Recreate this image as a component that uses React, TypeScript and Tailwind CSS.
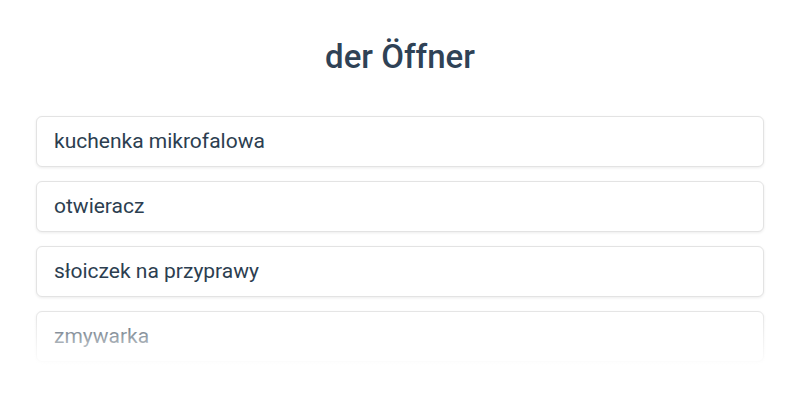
import * as React from "react";

const items = ["kuchenka mikrofalowa", "otwieracz", "słoiczek na przyprawy", "zmywarka"];

export default function App() {
  return (
    <div className="min-h-[400px] bg-white font-['Roboto',sans-serif] text-[#2c3e50]">
      <h1 className="pt-[37px] text-center text-[33px] font-medium leading-[40px] text-[#2f4256]">der Öffner</h1>
      <div className="relative mx-auto mt-[39px] flex w-[728px] flex-col gap-[14px]">
        {items.map((item) => (
          <div
            key={item}
            className="rounded-md border border-[#e3e3e3] bg-white px-[17px] py-[11px] text-[21px] leading-[27px] shadow-[0_1px_3px_rgba(0,0,0,0.08)]"
          >
            {item}
          </div>
        ))}
        <div className="pointer-events-none absolute inset-x-[-8px] bottom-[-6px] h-[62px] bg-gradient-to-b from-white/0 to-white" />
      </div>
    </div>
  );
}
